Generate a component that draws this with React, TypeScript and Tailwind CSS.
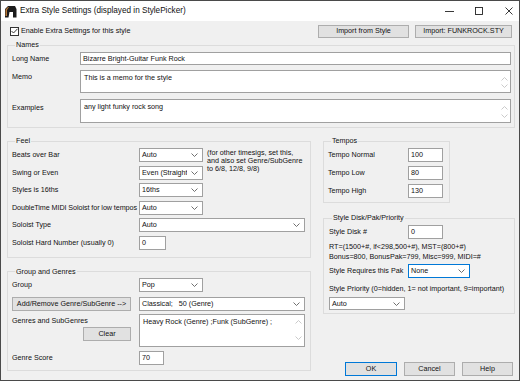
import React from 'react';

const Chevron = ({ up = false, className = '' }: { up?: boolean; className?: string }) => (
  <svg width="7" height="4" viewBox="0 0 7 4" className={className}>
    <polyline
      points={up ? '0.5,3.5 3.5,0.5 6.5,3.5' : '0.5,0.5 3.5,3.5 6.5,0.5'}
      fill="none"
      stroke="currentColor"
      strokeWidth="0.9"
    />
  </svg>
);

const Select = ({ w, text, focused = false, h = 'h-[14px]' }: { w: string; text: string; focused?: boolean; h?: string }) => (
  <div
    className={`${w} ${h} flex items-center bg-white border ${focused ? 'border-[#0078d7]' : 'border-[#a0a0a0]'}`}
  >
    <span className="flex-1 overflow-hidden whitespace-pre pl-[2px]">{text}</span>
    <span className="w-[15px] flex justify-center text-[#606060]">
      <Chevron />
    </span>
  </div>
);

const Input = ({ w, value }: { w: string; value: string }) => (
  <div className={`${w} h-[14px] flex items-center bg-white border border-[#a0a0a0] pl-[2px]`}>{value}</div>
);

const TextArea = ({ w, h, value, arrows = 'pt-[6px] pb-[4px]' }: { w: string; h: string; value: string; arrows?: string }) => (
  <div className={`${w} ${h} flex bg-white border border-[#a0a0a0]`}>
    <div className="flex-1 pl-[3px] pt-[3px] whitespace-pre">{value}</div>
    <div className={`w-[12px] flex flex-col items-center justify-between text-[#c4c4c4] ${arrows}`}>
      <Chevron up />
      <Chevron />
    </div>
  </div>
);

const Button = ({ w, label, primary = false, h = 'h-[14px]' }: { w: string; label: string; primary?: boolean; h?: string }) => (
  <div
    className={`${w} ${h} flex items-center justify-center bg-[#e1e1e1] border ${primary ? 'border-[#0078d7]' : 'border-[#adadad]'}`}
  >
    {label}
  </div>
);

const Group = ({ title, className, children }: { title: string; className: string; children: React.ReactNode }) => (
  <fieldset className={`border border-[#dcdcdc] ${className}`}>
    <legend className="ml-[3px] px-[1px] leading-[8px]">{title}</legend>
    {children}
  </fieldset>
);

const App = () => {
  return (
    <div className="w-[520px] h-[381px] flex flex-col overflow-hidden border border-[#4a4a4a] bg-[#f0f0f0] text-[7.2px] leading-[8px] text-[#111] font-['Liberation_Sans','Arial',sans-serif]">
      {/* Title bar */}
      <div className="h-[20px] shrink-0 flex items-center bg-white pl-[3px]">
        <svg width="13" height="13" viewBox="0 0 13 13">
          <path d="M1 4 L4 1 L11 1 L12.5 4 L12.5 12.5 L9 12.5 L9 7 L5.5 7 L4.5 12.5 L1 12.5 Z" fill="#1b1b1b" />
          <path d="M1.5 4.5 L4 2 L5 2 L3 5 L3 11 L1.5 11 Z" fill="#b87838" />
        </svg>
        <span className="ml-[3px] text-[8.2px]">Extra Style Settings (displayed in StylePicker)</span>
        <div className="ml-auto flex items-center pr-[6px] text-[#222]">
          <svg width="9" height="7" viewBox="0 0 9 7">
            <line x1="0" y1="3.5" x2="9" y2="3.5" stroke="currentColor" strokeWidth="0.9" />
          </svg>
          <svg width="8" height="8" viewBox="0 0 8 8" className="ml-[21px]">
            <rect x="0.5" y="0.5" width="7" height="7" fill="none" stroke="currentColor" strokeWidth="0.9" />
          </svg>
          <svg width="8" height="8" viewBox="0 0 8 8" className="ml-[22px]">
            <path d="M0.5 0.5 L7.5 7.5 M7.5 0.5 L0.5 7.5" stroke="currentColor" strokeWidth="0.9" />
          </svg>
        </div>
      </div>

      <div className="flex-1 pl-[6px] pr-[4px]">
        {/* Enable row */}
        <div className="mt-[3px] h-[14px] flex items-center">
          <div className="ml-[3px] w-[9px] h-[9px] bg-white border border-[#333] flex items-center justify-center">
            <svg width="7" height="6" viewBox="0 0 7 6">
              <polyline points="0.5,3 2.5,5 6.5,0.8" fill="none" stroke="#222" strokeWidth="0.9" />
            </svg>
          </div>
          <span className="ml-[2px]">Enable Extra Settings for this style</span>
          <div className="ml-auto mr-[3px] flex gap-[6px]">
            <Button w="w-[91px]" h="h-[13px]" label="Import from Style" />
            <Button w="w-[97px]" h="h-[13px]" label="Import: FUNKROCK.STY" />
          </div>
        </div>

        {/* Names */}
        <Group title="Names" className="mt-[3px] pt-[3px] pb-[4px] pl-[4px] pr-[3px]">
          <div className="flex flex-col">
            <div className="flex items-center">
              <span className="w-[68px]">Long Name</span>
              <div className="flex-1 h-[13px] flex items-center bg-white border border-[#a0a0a0] pl-[2px]">
                Bizarre Bright-Guitar Funk Rock
              </div>
            </div>
            <div className="mt-[5px] flex items-start">
              <span className="w-[68px] pt-[3px]">Memo</span>
              <TextArea w="flex-1" h="h-[23px]" value="This is a memo for the style" />
            </div>
            <div className="mt-[6px] flex items-start">
              <span className="w-[68px] pt-[5px]">Examples</span>
              <TextArea w="flex-1" h="h-[24px]" value="any light funky rock song" />
            </div>
          </div>
        </Group>

        <div className="mt-[9px] flex gap-[12px] items-start">
          {/* Left column */}
          <div className="w-[304px] flex flex-col">
            <Group title="Feel" className="pt-[3px] pb-[7px] pl-[4px]">
              <div className="grid grid-cols-[127px_64px_1fr] grid-rows-[14px_14px_14px_14px_14px_14px] gap-y-[3.5px] items-center">
                <span>Beats over Bar</span>
                <Select w="w-[64px]" text="Auto" />
                <div className="row-span-3 self-start pl-[4px] pt-[1px] leading-[8px]">
                  (for other timesigs, set this,
                  <br />
                  and also set Genre/SubGenre
                  <br />
                  to 6/8, 12/8, 9/8)
                </div>
                <span>Swing or Even</span>
                <Select w="w-[64px]" text="Even (Straight)" />
                <span>Styles is 16ths</span>
                <Select w="w-[64px]" text="16ths" />
                <span className="whitespace-nowrap tracking-[-0.08px]">DoubleTime MIDI Soloist for low tempos</span>
                <Select w="w-[64px]" text="Auto" />
                <span />
                <span>Soloist Type</span>
                <div className="col-span-2">
                  <Select w="w-[166px]" text="Auto" />
                </div>
                <span>Soloist Hard Number (usually 0)</span>
                <Input w="w-[27px]" value="0" />
                <span />
              </div>
            </Group>

            <Group title="Group and Genres" className="mt-[10px] pt-[2px] pb-[5px] pl-[4px]">
              <div className="flex items-center h-[14px]">
                <span className="w-[127px]">Group</span>
                <Select w="w-[64px]" text="Pop" />
              </div>
              <div className="mt-[5px] flex items-center h-[14px]">
                <Button w="w-[119px]" label="Add/Remove Genre/SubGenre -->" />
                <div className="ml-[8px]">
                  <Select w="w-[166px]" text="Classical;   50 (Genre)" />
                </div>
              </div>
              <div className="mt-[3px] flex items-start">
                <div className="w-[127px] flex flex-col">
                  <span className="pt-[3px]">Genres and SubGenres</span>
                  <div className="mt-[2px] self-end mr-[8px]">
                    <Button w="w-[48px]" label="Clear" />
                  </div>
                </div>
                <TextArea
                  w="w-[166px]"
                  h="h-[33px]"
                  value="Heavy Rock (Genre) ;Funk (SubGenre) ;"
                  arrows="pt-[5px] pb-[6px]"
                />
              </div>
              <div className="mt-[4px] flex items-center h-[14px]">
                <span className="w-[127px]">Genre Score</span>
                <Input w="w-[25px]" value="70" />
              </div>
            </Group>
          </div>

          {/* Right column */}
          <div className="w-[192px] flex flex-col">
            <Group title="Tempos" className="w-[127px] pt-[3px] pb-[4px] pl-[4px]">
              <div className="flex flex-col gap-[4px]">
                <div className="flex items-center h-[14px]">
                  <span className="w-[80px]">Tempo Normal</span>
                  <Input w="w-[35px]" value="100" />
                </div>
                <div className="flex items-center h-[14px]">
                  <span className="w-[80px]">Tempo Low</span>
                  <Input w="w-[35px]" value="80" />
                </div>
                <div className="flex items-center h-[14px]">
                  <span className="w-[80px]">Tempo High</span>
                  <Input w="w-[35px]" value="130" />
                </div>
              </div>
            </Group>

            <Group title="Style Disk/Pak/Priority" className="mt-[11px] pt-[3px] pb-[3px] pl-[5px]">
              <div className="flex items-center h-[14px]">
                <span className="w-[79px]">Style Disk #</span>
                <Input w="w-[35px]" value="0" />
              </div>
              <div className="mt-[3px] leading-[9.5px]">
                <div>RT=(1500+#, if&lt;298,500+#), MST=(800+#)</div>
                <div>Bonus=800, BonusPak=799, Misc=999, MIDI=#</div>
              </div>
              <div className="mt-[3px] flex items-center h-[14px]">
                <span className="w-[79px]">Style Requires this Pak</span>
                <Select w="w-[62px]" text="None" focused />
              </div>
              <div className="mt-[6px] leading-[9.5px] whitespace-nowrap">
                Style Priority (0=hidden, 1= not important, 9=important)
              </div>
              <div className="mt-[3.5px]">
                <Select w="w-[76px]" h="h-[13px]" text="Auto" />
              </div>
            </Group>

            <div className="mt-[48px] flex justify-end gap-[7px] pr-[2px]">
              <Button w="w-[52px]" label="OK" primary />
              <Button w="w-[51px]" label="Cancel" />
              <Button w="w-[51px]" label="Help" />
            </div>
          </div>
        </div>
      </div>
    </div>
  );
};

export default App;
